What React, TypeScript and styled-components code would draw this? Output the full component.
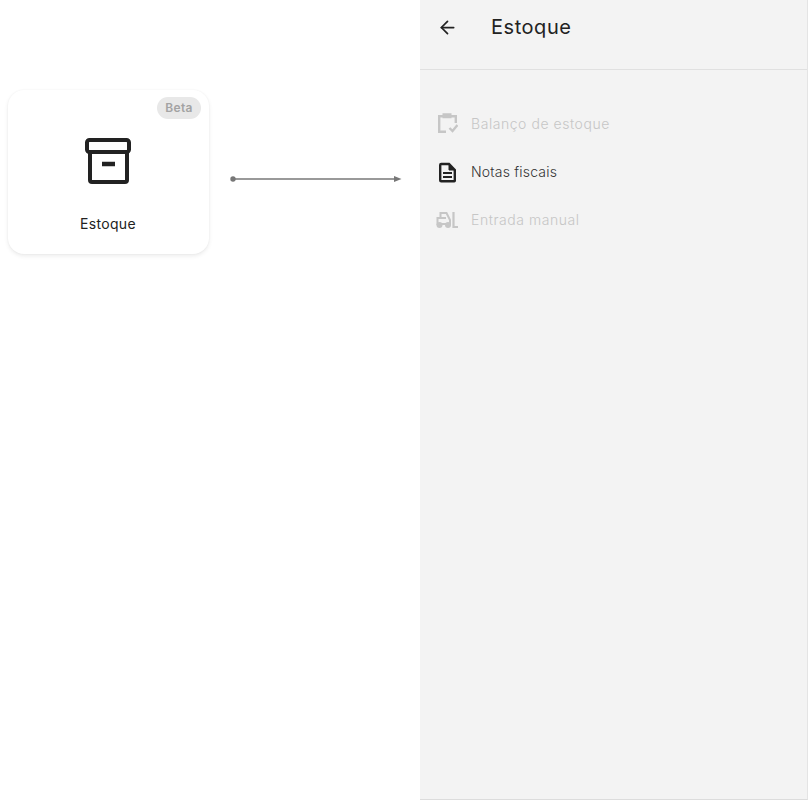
import styled, { createGlobalStyle } from "styled-components";
import { ArrowLeft } from "lucide-react";

const GlobalStyle = createGlobalStyle`
  html, body {
    margin: 0;
    background: #fff;
    font-family: "Inter", "Liberation Sans", sans-serif;
  }
`;

const Page = styled.div`
  display: flex;
  width: 808px;
  height: 800px;
  overflow: hidden;
`;

const Canvas = styled.div`
  display: flex;
  align-items: flex-start;
  width: 420px;
  padding: 90px 0 0 8px;
  box-sizing: border-box;
`;

const Card = styled.div`
  position: relative;
  display: flex;
  flex-direction: column;
  align-items: center;
  width: 201px;
  height: 164px;
  padding-top: 48px;
  box-sizing: border-box;
  border-radius: 16px;
  background: #fff;
  box-shadow: 0 2px 4px rgba(0, 0, 0, 0.08), 0 0 2px rgba(0, 0, 0, 0.05);
`;

const Badge = styled.span`
  position: absolute;
  top: 7px;
  right: 8px;
  width: 44px;
  height: 22px;
  border-radius: 11px;
  background: #e8e8e8;
  color: #a3a3a3;
  font-size: 12px;
  font-weight: 600;
  letter-spacing: 0.3px;
  line-height: 22px;
  text-align: center;
`;

const CardLabel = styled.span`
  margin: 28px 0 0 -1px;
  color: #222;
  font-size: 14px;
  letter-spacing: 0.3px;
  line-height: 20px;
`;

const Connector = styled.svg`
  flex: none;
  margin: 84px 0 0 21px;
`;

const Panel = styled.aside`
  width: 388px;
  height: 800px;
  box-sizing: border-box;
  background: #f3f3f3;
  border-right: 1px solid #e4e4e4;
  border-bottom: 1px solid #dcdcdc;
`;

const Header = styled.header`
  display: flex;
  align-items: center;
  height: 70px;
  padding: 0 0 15px 17px;
  box-sizing: border-box;
  border-bottom: 1px solid #e0e0e0;
  color: #222;
`;

const Title = styled.h1`
  margin: 0 0 0 33px;
  font-size: 20px;
  font-weight: 400;
  letter-spacing: 0.55px;
  line-height: 28px;
`;

const Menu = styled.nav`
  display: flex;
  flex-direction: column;
  padding-top: 29px;
`;

const MenuItem = styled.a<{ $disabled?: boolean }>`
  display: flex;
  align-items: center;
  gap: 13px;
  height: 48px;
  padding-left: 15px;
  color: ${(p) => (p.$disabled ? "#c6c6c6" : "#333")};
  font-size: 14px;
  font-weight: 300;
  letter-spacing: ${(p) => (p.$disabled ? "0.55px" : "0.2px")};
`;

const MenuIcon = styled.svg`
  flex: none;
  width: 23px;
  height: 24px;
`;

export default function App() {
  return (
    <Page>
      <GlobalStyle />
      <Canvas>
        <Card>
          <Badge>Beta</Badge>
          <svg width="48" height="48" viewBox="0 0 48 48" fill="none" stroke="#222" strokeWidth="4">
            <rect x="2" y="2" width="42" height="12" rx="2.5" />
            <path d="M5 14v28a2 2 0 0 0 2 2h33a2 2 0 0 0 2-2V14" />
            <path d="M17 26h13" strokeWidth="4.500" />
          </svg>
          <CardLabel>Estoque</CardLabel>
        </Card>
        <Connector width="172" height="10" viewBox="0 0 172 10">
          <circle cx="3" cy="5" r="2.7" fill="#777" />
          <path d="M3 5h165" stroke="#777" strokeWidth="1.4" />
          <path d="M164 2l7.500 3-7.500 3z" fill="#777" />
        </Connector>
      </Canvas>
      <Panel>
        <Header>
          <ArrowLeft size={21} strokeWidth={2} />
          <Title>Estoque</Title>
        </Header>
        <Menu>
          <MenuItem $disabled>
            <MenuIcon viewBox="0 0 23 24" fill="none" stroke="#c6c6c6" strokeWidth="2.4">
              <path d="M8 5.200H4.200V20.800H11" />
              <path d="M16 5.200h4.800V12" />
              <path d="M8.500 3.200h7v3h-7z" fill="#c6c6c6" strokeWidth="2" />
              <path d="M14.500 17l3 3 5-6" />
            </MenuIcon>
            Balanço de estoque
          </MenuItem>
          <MenuItem>
            <MenuIcon viewBox="0 0 23 24" fill="none" stroke="#222" strokeWidth="2.4">
              <path d="M5.200 6a1 1 0 0 1 1-1H14l5.800 6v10.800a.500.500 0 0 1-.500.500H6.200a1 1 0 0 1-1-1z" />
              <path d="M14 5l5.800 6H14z" fill="#222" strokeWidth="1" />
              <path d="M8 14h9M8 18h9" strokeWidth="2" />
            </MenuIcon>
            Notas fiscais
          </MenuItem>
          <MenuItem $disabled>
            <MenuIcon viewBox="0 0 23 24" fill="none" stroke="#c6c6c6" strokeWidth="2">
              <path d="M2.500 17v-6h3V6h6l3.500 7v4z" />
              <path d="M6 11h5" />
              <circle cx="4.500" cy="18" r="3" fill="#c6c6c6" stroke="none" />
              <circle cx="13" cy="18" r="3" fill="#c6c6c6" stroke="none" />
              <path d="M18.500 5v15h4.500" strokeWidth="2.200" />
            </MenuIcon>
            Entrada manual
          </MenuItem>
        </Menu>
      </Panel>
    </Page>
  );
}
